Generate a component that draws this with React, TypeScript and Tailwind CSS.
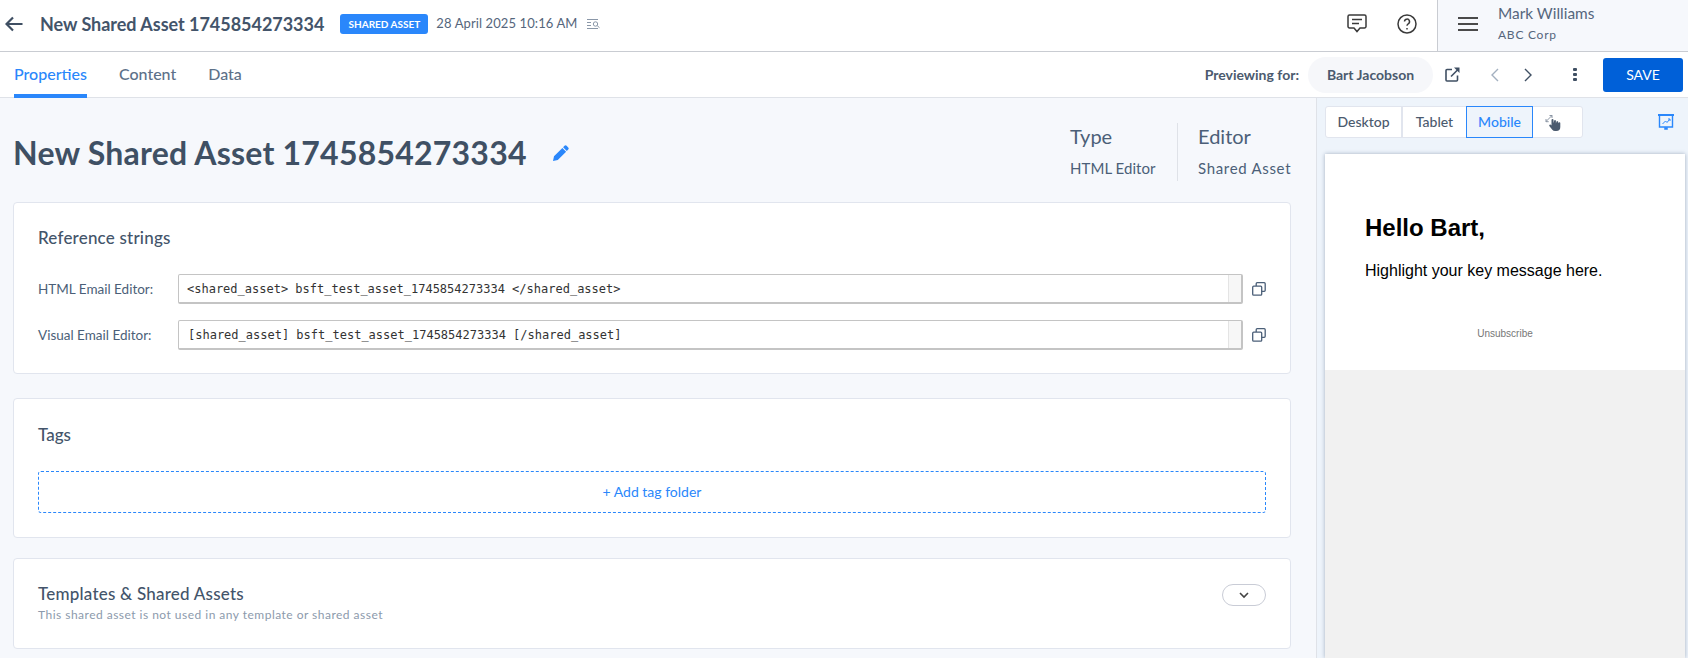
import React from "react";

const sans = "font-['Lato','Liberation_Sans',sans-serif]";

function Card({ className = "", children }: { className?: string; children: React.ReactNode }) {
  return <div className={`bg-white border border-[#e1e5ee] rounded-[4px] ${className}`}>{children}</div>;
}

function CopyIcon() {
  return (
    <svg width="14" height="14" viewBox="0 0 14 14" fill="none" stroke="#4b5f78" strokeWidth="1.3" className="shrink-0">
      <rect x="0.7" y="4.2" width="9" height="9" rx="1" />
      <path d="M4.2 4V1.7a1 1 0 0 1 1-1h7a1 1 0 0 1 1 1v6.6a1 1 0 0 1-1 1H9.8" />
    </svg>
  );
}

function RefRow({ label, value, pad }: { label: string; value: string; pad: string }) {
  return (
    <div className="flex items-center">
      <div className="w-[140px] text-[13.5px] text-[#4b5f78]">{label}</div>
      <div className="flex flex-1 h-[30px] border border-[#c4c4c4] rounded-[2px] border-b-2 border-r-2">
        <div className={`flex-1 flex items-center ${pad} font-['DejaVu_Sans_Mono',monospace] text-[12px] text-[#333] whitespace-pre`}>{value}</div>
        <div className="w-[13px] bg-[#f7f7f7] border-l border-[#e4e4e4]" />
      </div>
      <div className="ml-[9px] w-[14px]"><CopyIcon /></div>
    </div>
  );
}

export default function App() {
  return (
    <div className={`${sans} w-[1688px] h-[658px] overflow-hidden bg-white flex flex-col`}>
      {/* top header */}
      <header className="h-[52px] shrink-0 border-b border-[#c9ccd2] flex items-stretch">
        <div className="flex items-center flex-1 min-w-0 pb-[3px]">
          <svg width="18" height="16" viewBox="0 0 18 16" fill="none" stroke="#3f4f63" strokeWidth="2.2" className="ml-[5px]">
            <path d="M17.5 8H1.5M8 1.5 1.5 8 8 14.5" />
          </svg>
          <div className="ml-[17px] text-[18px] tracking-[-0.03px] font-bold text-[#43546a] whitespace-nowrap">New Shared Asset 1745854273334</div>
          <div className="ml-[16px] h-[20px] w-[88px] rounded-[3px] bg-[#2a87fb] text-white text-[10px] font-bold flex items-center justify-center">SHARED ASSET</div>
          <div className="ml-[8px] text-[13px] tracking-[0.1px] text-[#55667c] whitespace-nowrap">28 April 2025 10:16 AM</div>
          <svg width="14" height="12" viewBox="0 0 14 12" fill="none" stroke="#8a97a8" strokeWidth="1" className="ml-[9px]">
            <path d="M0 1.5h11M0 4.5h4M0 7.5h4M0 10.5h11" />
            <circle cx="8.5" cy="6" r="2.2" />
            <path d="m10.2 7.7 2.3 2" />
          </svg>
        </div>
        <div className="flex items-center gap-[30px] pr-[20px] pb-[4px]">
          <svg width="20" height="19" viewBox="0 0 20 19" fill="none" stroke="#3a3a3a" strokeWidth="1.5">
            <path d="M2.5 1h15A1.5 1.5 0 0 1 19 2.5v10a1.5 1.5 0 0 1-1.5 1.5H13l-3 3.5L7 14H2.5A1.5 1.5 0 0 1 1 12.5v-10A1.5 1.5 0 0 1 2.5 1Z" />
            <path d="M5 5.5h10M5 9.5h7" />
          </svg>
          <svg width="20" height="20" viewBox="0 0 20 20" fill="none" stroke="#3a3a3a" strokeWidth="1.5">
            <circle cx="10" cy="10" r="9" />
            <path d="M7.5 7.6a2.5 2.5 0 1 1 3.7 2.2c-.8.5-1.2 1-1.2 2" />
            <path d="M10 14v1.4" />
          </svg>
        </div>
        <div className="w-[251px] shrink-0 border-l border-[#c9ccd2] bg-[#f6f8fc] flex items-center">
          <div className="ml-[20px] w-[20px] flex flex-col gap-[4px] pb-[3px]">
            <div className="h-[2px] bg-[#4a4a4a]" />
            <div className="h-[2px] bg-[#4a4a4a]" />
            <div className="h-[2px] bg-[#4a4a4a]" />
          </div>
          <div className="ml-[20px] self-start pt-[3px]">
            <div className="text-[15.4px] leading-[20px] text-[#55667c]">Mark Williams</div>
            <div className="mt-[4px] text-[12px] tracking-[0.75px] leading-[16px] text-[#55667c]">ABC Corp</div>
          </div>
        </div>
      </header>

      {/* tab bar */}
      <div className="h-[46px] shrink-0 border-b border-[#dfe2e8] flex items-stretch">
        <div className="flex flex-1 text-[16px] pl-[14px] gap-[32px]">
          <div className="relative flex items-center font-medium text-[#2a87fb] pb-[2px]">
            Properties
            <div className="absolute left-0 right-0 bottom-[-1px] h-[4px] bg-[#2a87fb]" />
          </div>
          <div className="flex items-center font-medium text-[#5d7189] pb-[2px]">Content</div>
          <div className="flex items-center font-medium text-[#5d7189] pb-[2px]">Data</div>
        </div>
        <div className="flex items-center">
          <div className="text-[14px] font-bold text-[#4b5a6e]">Previewing for:</div>
          <div className="ml-[9px] w-[125px] h-[36px] rounded-full bg-[#f6f7fa] flex items-center justify-center text-[14px] font-bold text-[#4b5a6e]">Bart Jacobson</div>
          <svg width="15" height="15" viewBox="0 0 15 15" fill="none" stroke="#3f4f63" strokeWidth="1.6" className="ml-[12px]">
            <path d="M7 2.5H2a1 1 0 0 0-1 1V13a1 1 0 0 0 1 1h9.5a1 1 0 0 0 1-1V8.5" />
            <path d="M6 9.5 13 2.5" />
            <path d="M9 .5h5.5V6Z" fill="#3f4f63" stroke="none" />
          </svg>
          <svg width="9" height="14" viewBox="0 0 9 14" fill="none" stroke="#a3b0c0" strokeWidth="1.4" className="ml-[30px]">
            <path d="M8 1 2 7l6 6" />
          </svg>
          <svg width="9" height="14" viewBox="0 0 9 14" fill="none" stroke="#3f4f63" strokeWidth="1.4" className="ml-[25px]">
            <path d="m1 1 6 6-6 6" />
          </svg>
          <div className="ml-[40px] flex flex-col gap-[2px]">
            <div className="w-[4px] h-[3px] rounded-[1px] bg-[#3f4f63]" />
            <div className="w-[4px] h-[3px] rounded-[1px] bg-[#3f4f63]" />
            <div className="w-[4px] h-[3px] rounded-[1px] bg-[#3f4f63]" />
          </div>
          <div className="ml-[26px] mr-[5px] w-[80px] h-[34px] rounded-[3px] bg-[#0060d8] text-white text-[14px] flex items-center justify-center">SAVE</div>
        </div>
      </div>

      <div className="flex flex-1 min-h-0">
        {/* left */}
        <main className="w-[1317px] shrink-0 bg-[#f6f8fc] border-r border-[#dfe2e8] pl-[13px] pr-[25px]">
          <div className="h-[104px] flex items-start">
            <div className="flex-1 flex items-center pt-[35px]">
              <h1 className="text-[32px] tracking-[0.22px] leading-[40px] font-bold text-[#3f5064] whitespace-nowrap">New Shared Asset 1745854273334</h1>
              <svg width="16" height="16" viewBox="0 0 16 16" fill="#2a87fb" className="ml-[26px]">
                <path d="M11.5.8a1.5 1.5 0 0 1 2.1 0l1.6 1.6a1.5 1.5 0 0 1 0 2.1l-1.4 1.4-3.7-3.7L11.5.8ZM9.4 3l3.7 3.7-8.3 8.3L0 16l1-4.8L9.4 3Z" />
              </svg>
            </div>
            <div className="flex mt-[25px] text-[#4b5f78]">
              <div className="w-[107px]">
                <div className="text-[20px] leading-[28px] -mt-[1px]">Type</div>
                <div className="mt-[8px] text-[15px] tracking-[0.05px] leading-[20px]">HTML Editor</div>
              </div>
              <div className="border-l border-[#dfe2e8] pl-[20px] w-[114px] whitespace-nowrap pb-[3px]">
                <div className="text-[20px] leading-[28px] -mt-[1px]">Editor</div>
                <div className="mt-[8px] text-[15px] tracking-[0.68px] leading-[20px]">Shared Asset</div>
              </div>
            </div>
          </div>

          <Card className="h-[172px] px-[24px] pt-[24px]">
            <div className="text-[17px] tracking-[0.2px] leading-[22px] text-[#43546a] font-medium">Reference strings</div>
            <div className="mt-[25px] flex flex-col gap-[16px]">
              <RefRow label="HTML Email Editor:" value="<shared_asset> bsft_test_asset_1745854273334 </shared_asset>" pad="pl-[8px]" />
              <RefRow label="Visual Email Editor:" value="[shared_asset] bsft_test_asset_1745854273334 [/shared_asset]" pad="pl-[9px]" />
            </div>
          </Card>

          <Card className="mt-[24px] h-[140px] px-[24px] pt-[25px]">
            <div className="text-[17px] leading-[22px] text-[#43546a] font-medium">Tags</div>
            <div className="mt-[25px] h-[42px] border border-dashed border-[#2a87fb] rounded-[3px] flex items-center justify-center text-[14px] text-[#2a87fb] pb-[2px]">+ Add tag folder</div>
          </Card>

          <Card className="mt-[20px] h-[91px] px-[24px] pt-[24px] flex items-start justify-between">
            <div>
              <div className="text-[17px] tracking-[0.22px] leading-[22px] text-[#43546a] font-medium">Templates &amp; Shared Assets</div>
              <div className="mt-[2px] text-[12px] leading-[16px] text-[#8c9aac] tracking-[0.48px]">This shared asset is not used in any template or shared asset</div>
            </div>
            <div className="mt-[1px] w-[44px] h-[22px] rounded-full border border-[#c9ccd6] flex items-center justify-center">
              <svg width="10" height="7" viewBox="0 0 10 7" fill="none" stroke="#444" strokeWidth="1.6"><path d="m1 1 4 4 4-4" /></svg>
            </div>
          </Card>
        </main>

        {/* right */}
        <aside className="flex-1 bg-[#eef4fb] flex flex-col">
          <div className="h-[56px] shrink-0 flex items-start pt-[8px] pl-[8px]">
            <div className="flex h-[32px] w-[258px] rounded-[3px] border border-[#e1e5ee] bg-white text-[14px] font-medium text-[#4b5a6e]">
              <div className="w-[77px] flex items-center justify-center border-r-2 border-[#e1e5ee] pb-[2px]">Desktop</div>
              <div className="w-[63px] flex items-center justify-center pb-[2px]">Tablet</div>
              <div className="w-[67px] -my-px flex items-center justify-center border border-[#2a87fb] text-[#2a87fb] pb-[2px] bg-[#eef4fb]">Mobile</div>
              <div className="flex-1 flex items-center justify-center">
                <svg width="17" height="17" viewBox="0 0 17 17" className="mr-[8px]">
                  <path d="M1 7.5 7 1.5M1 5v2.7h2.7M7 1.5H4.5M7 1.5V4" fill="none" stroke="#7f8b9b" strokeWidth="0.9" />
                  <path d="M6.5 6a1 1 0 0 1 2 0v3.3L9.2 6.6a.9.9 0 0 1 1.7.3v2.5l.6-1.8a.9.9 0 0 1 1.7.4v1.3l.5-.8a.9.9 0 0 1 1.6.5V13a4 4 0 0 1-4 4H10a3.5 3.5 0 0 1-2.7-1.3L4.3 12a1 1 0 0 1 1.5-1.2l.7.6V6Z" fill="#4b5a6e" />
                </svg>
              </div>
            </div>
            <svg width="16" height="17" viewBox="0 0 16 17" fill="none" stroke="#2a87fb" className="ml-[75px] mt-[8px]">
              <path d="M0 1h16" strokeWidth="2" />
              <path d="M1.5 1.5v11.5h13V1.5" strokeWidth="1.4" />
              <path d="M6.5 13.5h3v2h-3z" fill="#2a87fb" strokeWidth="0.5" />
              <path d="m4.5 10 3-3 1.5 1.5 2.5-3M10 5h2v2" strokeWidth="1" />
            </svg>
          </div>
          <div className="flex-1 ml-[8px] mr-[3px] flex flex-col shadow-[0_0_4px_rgba(70,90,120,0.45)]">
            <div className="h-[216px] bg-white relative font-['Liberation_Sans',sans-serif] pl-[40px]">
              <div className="pt-[60px] text-[24px] leading-[28px] font-bold text-black">Hello Bart,</div>
              <div className="mt-[19px] text-[16px] leading-[20px] text-black">Highlight your key message here.</div>
              <div className="mt-[46px] -ml-[40px] text-center text-[10px] leading-[14px] text-[#777]">Unsubscribe</div>
            </div>
            <div className="flex-1 bg-[#f1f1f1]" />
          </div>
        </aside>
      </div>
    </div>
  );
}
